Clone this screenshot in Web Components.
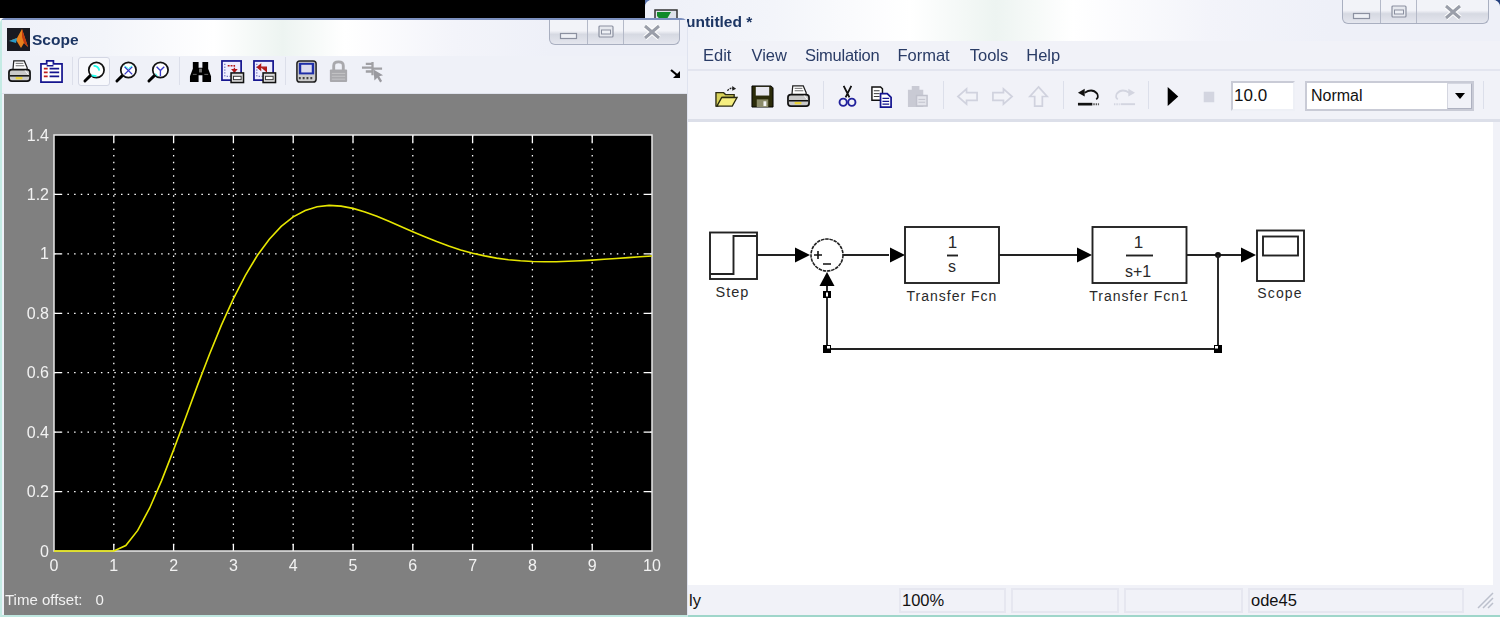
<!DOCTYPE html>
<html>
<head>
<meta charset="utf-8">
<title>Scope</title>
<style>
  html, body { margin: 0; height: 100%; overflow: hidden; background: #fff; }
  body {
    position: relative; width: 1500px; height: 619px;
    font-family: "Liberation Sans", Arial, sans-serif;
    background:
      linear-gradient(#000, #000) 0 0 / 645px 18px no-repeat,
      linear-gradient(#5b76b0, #5b76b0) 645px 0 / 8px 8px no-repeat,
      linear-gradient(#24407e, #24407e) 1490px 0 / 10px 8px no-repeat,
      #fff;
  }
</style>
</head>
<body>

<model-window title="untitled *">
  <tool-strip>
    <tool-btn icon="open" w="36"></tool-btn>
    <tool-btn icon="save" w="36"></tool-btn>
    <tool-btn icon="print" w="36"></tool-btn>
    <tool-sep w="14"></tool-sep>
    <tool-btn icon="cut" w="34"></tool-btn>
    <tool-btn icon="copy" w="34"></tool-btn>
    <tool-btn icon="paste" w="38"></tool-btn>
    <tool-sep w="14"></tool-sep>
    <tool-btn icon="back" w="34"></tool-btn>
    <tool-btn icon="forward" w="36"></tool-btn>
    <tool-btn icon="up" w="36"></tool-btn>
    <tool-sep w="14"></tool-sep>
    <tool-btn icon="undo" w="36"></tool-btn>
    <tool-btn icon="redo" w="36"></tool-btn>
    <tool-sep w="12"></tool-sep>
    <tool-btn icon="play" w="36"></tool-btn>
    <tool-btn icon="stop" w="36"></tool-btn>
    <sim-fields></sim-fields>
    <tool-sep w="19"></tool-sep>
  </tool-strip>
</model-window>

<scope-window title="Scope">
  <tool-strip>
    <tool-btn icon="print" w="32"></tool-btn>
    <tool-btn icon="params" w="32"></tool-btn>
    <tool-sep w="11"></tool-sep>
    <tool-btn icon="zoom" w="32" pressed></tool-btn>
    <tool-btn icon="zoomx" w="32"></tool-btn>
    <tool-btn icon="zoomy" w="32"></tool-btn>
    <tool-sep w="10"></tool-sep>
    <tool-btn icon="binoculars" w="32"></tool-btn>
    <tool-btn icon="saveaxes" w="32"></tool-btn>
    <tool-btn icon="restoreaxes" w="32"></tool-btn>
    <tool-sep w="10"></tool-sep>
    <tool-btn icon="scopeparams" w="32"></tool-btn>
    <tool-btn icon="lock" w="32"></tool-btn>
    <tool-btn icon="selector" w="36"></tool-btn>
  </tool-strip>
  <scope-plot></scope-plot>
</scope-window>

<script>
(function () {
  var INK = '#1c3563';
  var FONT = '"Liberation Sans", Arial, sans-serif';
  var SVG_FONT = "'Liberation Sans', Arial, sans-serif";

  // Toolbar glyphs, all on a 24 x 24 box.
  var ICONS = {
    print:
      '<path d="M6 1h11l3 7v4H5z" fill="#fff" stroke="#222" stroke-width="1.3"/>' +
      '<path d="M8 3.500h8M8 6h9" stroke="#666"/>' +
      '<path d="M1 13q0-3 3-3h16q3 0 3 3v6q0 3-3 3H4q-3 0-3-3z" fill="#c9c9c9" stroke="#111" stroke-width="1.8"/>' +
      '<path d="M2 16.500h20" stroke="#111" stroke-width="1.6"/><path d="M8 19h7" stroke="#e8d23a" stroke-width="2.4"/>' +
      '<path d="M18 11l3 4" stroke="#fff"/>',
    params:
      '<path d="M1 4h6V1h7v3h9v19H1z" fill="#fff" stroke="#16168f" stroke-width="1.8"/>' +
      '<path d="M4 9h4M4 13h4M4 17h4" stroke="#c02020" stroke-width="1.8"/>' +
      '<path d="M10 9h10M10 13h10M10 17h10M7 6h7" stroke="#16168f" stroke-width="1.8"/>',
    zoom: lens('<path d="M11 6a6 6 0 0 1 6 5" stroke="#2fe" stroke-width="2" fill="none"/><path d="M9 16l5 1" stroke="#2fe" stroke-width="2"/>'),
    zoomx: lens('<path d="M10 7l8 8M18 7l-8 8" stroke="#3a3ac8" stroke-width="1.4"/><path d="M10 6l4 3 4-3" stroke="#2fe" fill="none"/>'),
    zoomy: lens('<path d="M10 7l4 4 4-4M14 11v6" stroke="#3a3ac8" stroke-width="1.4" fill="none"/><path d="M9 14l2 3" stroke="#2fe"/>'),
    binoculars:
      '<path d="M4 2h6v6h4V2h6v7l3 8v6H14v-7h-4v7H1v-6l3-8z" fill="#000"/>' +
      '<path d="M10.500 9h3v4h-3z" fill="#777"/><path d="M4 15h4M16 15h4" stroke="#666"/>',
    saveaxes: axes('<path d="M7 6h7v6" fill="none" stroke="#b01818" stroke-width="1.4" stroke-dasharray="2 1"/><path d="M10.500 9.500h7l-3.500 4z" fill="#b01818"/>'),
    restoreaxes: axes('<path d="M8 4.500l-3.500 3 3.500 3zM8 7.500h6v5" fill="#b01818" stroke="#b01818" stroke-width="1.2"/>'),
    scopeparams:
      '<rect x="2" y="1" width="20" height="22" rx="3" fill="#ccc" stroke="#222" stroke-width="1.6"/>' +
      '<rect x="4" y="3" width="16" height="12" fill="#1e2ea8"/><rect x="6.500" y="5" width="11" height="8" fill="#dde"/>' +
      '<path d="M4 19h16" stroke="#444" stroke-width="2.4" stroke-dasharray="2 2"/>',
    lock:
      '<path d="M7 11V6q0-4 5-4t5 4v5" fill="none" stroke="#a9a9ad" stroke-width="3"/>' +
      '<rect x="3" y="10" width="18" height="13" rx="1" fill="#a9a9ad"/>' +
      '<path d="M5 14h14M5 17h14M5 20h14" stroke="#c4c4c8"/>',
    selector:
      '<path d="M1 8h11M5 4h7M5 12h7M12 2v14M12 9h10" stroke="#a0a0a4" stroke-width="2.4" fill="none"/>' +
      '<path d="M13 10l10 6-4 1 3 5-2 1.500-3-5-3 3z" fill="#9a9aa0"/>',
    open:
      '<path d="M1 8h8l2 2h9v3H8L3 22H1z" fill="#d8d25a" stroke="#2a2a10" stroke-width="1.4"/>' +
      '<path d="M2 22l5-9h16l-5 9z" fill="#f5ee80" stroke="#2a2a10" stroke-width="1.4"/>' +
      '<path d="M13 6q3-4 7-2" fill="none" stroke="#222" stroke-width="1.4" stroke-dasharray="2 1"/><path d="M18 1l4 3-4 2z" fill="#222"/>',
    save:
      '<path d="M1 1h20l2 2v20H1z" fill="#2b2b0a" stroke="#000"/>' +
      '<rect x="5" y="2" width="14" height="9" fill="#e8e8ef"/>' +
      '<rect x="6" y="15" width="12" height="8" fill="#8b8b6a"/><rect x="13" y="17" width="3" height="5" fill="#f4f4f4"/>',
    cut:
      '<path d="M8 1l6 12M16 1l-6 12" stroke="#111" stroke-width="1.9"/>' +
      '<circle cx="7.500" cy="18" r="3.800" fill="none" stroke="#22229c" stroke-width="2"/>' +
      '<circle cx="16.500" cy="18" r="3.800" fill="none" stroke="#22229c" stroke-width="2"/>',
    copy:
      '<path d="M2 2h9l2 2v12H2z" fill="#fff" stroke="#111" stroke-width="1.5"/><path d="M4 6h6M4 9h6M4 12h6" stroke="#333"/>' +
      '<path d="M11 9h7l4 4v10H11z" fill="#fff" stroke="#14148f" stroke-width="1.8"/><path d="M13 14h7M13 17h7M13 20h7" stroke="#14148f" stroke-width="1.3"/>',
    paste:
      '<path d="M2 5h4V1h8v4h4v18H2z" fill="#c9cad4"/><path d="M11 11h11v11H11z" fill="#e4e5ec" stroke="#c0c1cc" stroke-width="1.5"/>' +
      '<path d="M13 15h7M13 18h7" stroke="#c0c1cc"/>',
    back: '<path d="M11 4l-9 8 9 8v-4h11V8H11z" fill="#f2f3f8" stroke="#d0d2de" stroke-width="1.8"/>',
    forward: '<path d="M13 4l9 8-9 8v-4H2V8h11z" fill="#f2f3f8" stroke="#d0d2de" stroke-width="1.8"/>',
    up: '<path d="M12 2l9 10h-5v10H8V12H3z" fill="#f2f3f8" stroke="#d0d2de" stroke-width="1.8"/>',
    undo:
      '<path d="M8 8q8-5 13 1 2 4-1 6" fill="none" stroke="#111" stroke-width="1.8"/><path d="M1 8l7-4v8z" fill="#111"/>' +
      '<path d="M1 20h15" stroke="#111" stroke-width="2.8"/><path d="M17 20h6" stroke="#555" stroke-width="2" stroke-dasharray="1.500 1"/>',
    redo:
      '<path d="M17 8q-8-5-13 1-2 4 1 6" fill="none" stroke="#d3d5e0" stroke-width="1.8"/><path d="M23 8l-7-4v8z" fill="#d3d5e0"/>' +
      '<path d="M8 20h15" stroke="#d3d5e0" stroke-width="2"/><path d="M1 20h6" stroke="#d3d5e0" stroke-width="2" stroke-dasharray="1.500 1"/>',
    play: '<path d="M7 2l11 10-11 10z" fill="#000"/>',
    stop: '<rect x="7" y="7" width="11" height="11" fill="#d3d5e0"/>'
  };

  function lens(inner) {
    return '<path d="M9 15L2 22" stroke="#000" stroke-width="3" stroke-linecap="round"/>' +
      '<circle cx="14" cy="10.500" r="8" fill="#fff" stroke="#111" stroke-width="1.8"/>' + inner;
  }

  function axes(inner) {
    return '<rect x="1" y="1" width="20" height="20" fill="#eef" stroke="#16168f" stroke-width="1.8"/>' +
      '<path d="M4 4v13h14" fill="none" stroke="#16168f" stroke-dasharray="1 2"/>' + inner +
      '<rect x="10.500" y="13.500" width="13" height="10" fill="#ddd" stroke="#111" stroke-width="1.6"/>' +
      '<rect x="13" y="17" width="8" height="3.500" fill="#fff" stroke="#333"/>';
  }

  class ToolBtn extends HTMLElement {
    connectedCallback() {
      var w = this.getAttribute('w') || 32;
      var press = this.hasAttribute('pressed');
      var root = this.attachShadow({ mode: 'open' });
      root.innerHTML =
        '<style>' +
        ':host{display:flex;align-items:center;justify-content:center;width:' + w + 'px;height:29px;flex:none;box-sizing:border-box;}' +
        (press ? ':host{background:#f7f8fc;border:1px solid #d4d7e4;border-radius:3px;}' : '') +
        'svg{display:block;width:23px;height:23px;overflow:visible;}' +
        '</style>' +
        '<svg viewBox="0 0 24 24">' + (ICONS[this.getAttribute('icon')] || '') + '</svg>';
    }
  }
  customElements.define('tool-btn', ToolBtn);

  class ToolSep extends HTMLElement {
    connectedCallback() {
      var w = this.getAttribute('w') || 14;
      this.attachShadow({ mode: 'open' }).innerHTML =
        '<style>:host{display:flex;justify-content:center;width:' + w + 'px;height:30px;flex:none;}' +
        'i{display:block;width:1px;height:28px;background:#dcdfea;}</style><i></i>';
    }
  }
  customElements.define('tool-sep', ToolSep);

  class ToolStrip extends HTMLElement {
    connectedCallback() {
      this.attachShadow({ mode: 'open' }).innerHTML =
        '<style>:host{display:flex;align-items:center;}</style><slot></slot>';
    }
  }
  customElements.define('tool-strip', ToolStrip);

  // min / max / close cluster hanging from the top edge of a window
  class CaptionButtons extends HTMLElement {
    connectedCallback() {
      this.attachShadow({ mode: 'open' }).innerHTML =
        '<style>' +
        ':host{display:flex;height:var(--cap-h,25px);box-sizing:border-box;border:1px solid #a9afc0;border-top:0;border-radius:0 0 6px 6px;' +
        'background:linear-gradient(#f2f3f8 0,#f2f3f8 45%,#d6d9e2 60%,#e4e6ee 100%);overflow:hidden;}' +
        'span{display:flex;align-items:center;justify-content:center;border-right:1px solid #b4b9c8;box-sizing:border-box;}' +
        'span:last-child{border-right:0;}' +
        'svg{display:block;overflow:visible;}' +
        '</style>' +
        '<span style="width:38px"><svg width="18" height="7" style="margin-top:9px"><rect x=".5" y=".5" width="16" height="5" fill="#eef0f5" stroke="#8b90a0" stroke-width="1.2"/></svg></span>' +
        '<span style="width:36px"><svg width="16" height="14"><rect x="1" y="1" width="14" height="11" rx="1" fill="#e6e8ee" stroke="#8b90a0" stroke-width="1.2"/><rect x="3.500" y="5" width="9" height="4" fill="#eef0f5" stroke="#8b90a0"/></svg></span>' +
        '<span style="flex:1"><svg width="18" height="14"><path d="M2 1l14 12M16 1L2 13" stroke="#fff" stroke-width="5"/><path d="M2 1l14 12M16 1L2 13" stroke="#9a9ea9" stroke-width="3"/></svg></span>';
    }
  }
  customElements.define('caption-buttons', CaptionButtons);

  var TITLE_BG = 'linear-gradient(90deg,#eef0f8 0,#f3f5fa 15%,#fff 31%,#edf4f1 41%,#fff 50%,#f3f4fa 66%,#eef0f8 80%)';

  class ScopeWindow extends HTMLElement {
    connectedCallback() {
      var root = this.attachShadow({ mode: 'open' });
      root.innerHTML =
        '<style>' +
        ':host{position:absolute;left:0;top:18px;width:688px;height:599px;display:flex;flex-direction:column;box-sizing:border-box;' +
        'background:#eff1f8;border-top:2px solid #7c90bf;border-left:2px solid #c4ebe4;border-right:1px solid #dfe3ef;border-bottom:2px solid #bfe8e0;' +
        'border-radius:5px 7px 0 0;font-family:' + FONT + ';filter:blur(.5px);}' +
        '.title{height:36px;flex:none;display:flex;align-items:center;padding:0 7px 0 5px;background:' + TITLE_BG + ';}' +
        '.logo{width:23px;height:23px;flex:none;margin:2px 2px 0 0;display:block;}' +
        '.name{flex:1;font-size:15.500px;font-weight:700;color:' + INK + ';margin-top:4px;}' +
        'caption-buttons{width:131px;align-self:flex-start;}' +
        '.bar{height:38px;flex:none;display:flex;align-items:center;padding:0 0 6px 1px;box-sizing:border-box;border-bottom:1px solid #dfe2ec;position:relative;}' +
        '.resize{position:absolute;right:6px;top:12px;}' +
        '.body{flex:1;display:flex;padding-left:2px;min-height:0;}' +
        '</style>' +
        '<div class="title">' +
        '<svg class="logo" viewBox="0 0 23 23"><rect width="23" height="23" fill="#1a1a22"/>' +
        '<path d="M2 13l8-3 5-9 6 18-4-4-3 5-5-8z" fill="#e8801c"/><path d="M2 13l8-3-1 5z" fill="#2a9ac8"/><path d="M15 1l6 18-4-4-2-6z" fill="#c23a10"/></svg>' +
        '<span class="name">' + this.getAttribute('title') + '</span>' +
        '<caption-buttons></caption-buttons></div>' +
        '<div class="bar"><slot></slot>' +
        '<svg class="resize" width="11" height="11" viewBox="0 0 11 11"><path d="M1 2l6 5" stroke="#000" stroke-width="2.2"/><path d="M10 3v7H3z" fill="#000"/></svg></div>' +
        '<div class="body"><slot name="plot"></slot></div>';
      this.querySelector('scope-plot').setAttribute('slot', 'plot');
    }
  }
  customElements.define('scope-window', ScopeWindow);

  class ScopePlot extends HTMLElement {
    connectedCallback() {
      var L = 50, R = 648, T = 41, B = 457; // axes box inside the grey panel
      var xOf = function (t) { return L + (R - L) * t / 10; };
      var yOf = function (v) { return B - (B - T) * v / 1.4; };
      var s = '', i;

      s += '<rect x="' + L + '" y="' + T + '" width="' + (R - L) + '" height="' + (B - T) + '" fill="#000"/>';
      for (i = 1; i < 10; i++) {
        s += '<path d="M' + xOf(i) + ' ' + T + 'V' + B + '" stroke="#fff" stroke-width="1.3" stroke-dasharray="1.500 5.200"/>';
        s += '<path d="M' + xOf(i) + ' ' + T + 'v7M' + xOf(i) + ' ' + B + 'v-7" stroke="#fff" stroke-width="1.3"/>';
      }
      for (i = 1; i < 7; i++) {
        var gy = yOf(i * 0.2);
        s += '<path d="M' + L + ' ' + gy + 'H' + R + '" stroke="#fff" stroke-width="1.3" stroke-dasharray="1.500 5.200"/>';
        s += '<path d="M' + L + ' ' + gy + 'h7M' + R + ' ' + gy + 'h-7" stroke="#fff" stroke-width="1.3"/>';
      }
      s += '<rect x="' + L + '" y="' + T + '" width="' + (R - L) + '" height="' + (B - T) + '" fill="none" stroke="#e8e8e8" stroke-width="1.5"/>';

      // unit step into 1/(s^2+s+1), step applied at t = 1; coarse steps like the solver's
      var pts = ['M' + xOf(0) + ' ' + yOf(0), 'L' + xOf(1) + ' ' + yOf(0)];
      for (var t = 1.2; t <= 10.001; t += 0.2) {
        var u = t - 1;
        var v = 1 - Math.exp(-0.5 * u) * (Math.cos(0.866 * u) + 0.5774 * Math.sin(0.866 * u));
        pts.push('L' + xOf(t).toFixed(1) + ' ' + yOf(v).toFixed(1));
      }
      s += '<path d="' + pts.join('') + '" fill="none" stroke="#e6e600" stroke-width="1.6"/>';

      var txt = 'font-family:' + SVG_FONT + ';font-size:16px;fill:#f2f2f2';
      ['0', '0.2', '0.4', '0.6', '0.8', '1', '1.2', '1.4'].forEach(function (lab, n) {
        s += '<text x="' + (L - 5) + '" y="' + (yOf(n * 0.2) + 5.5) + '" text-anchor="end" style="' + txt + '">' + lab + '</text>';
      });
      for (i = 0; i <= 10; i++) {
        s += '<text x="' + xOf(i) + '" y="' + (B + 20) + '" text-anchor="middle" style="' + txt + '">' + i + '</text>';
      }

      this.attachShadow({ mode: 'open' }).innerHTML =
        '<style>:host{display:block;flex:1;background:#808080;position:relative;}' +
        'svg{display:block;width:683px;height:522px;}' +
        '.off{position:absolute;left:1px;bottom:7px;color:#f2f2f2;font-size:15px;display:flex;gap:13px;}</style>' +
        '<svg viewBox="0 0 683 522">' + s + '</svg>' +
        '<div class="off"><span>Time offset:</span><span>0</span></div>';
    }
  }
  customElements.define('scope-plot', ScopePlot);

  class SimFields extends HTMLElement {
    connectedCallback() {
      this.attachShadow({ mode: 'open' }).innerHTML =
        '<style>' +
        ':host{display:flex;align-items:center;gap:10px;margin-left:5px;flex:none;}' +
        '.inp{box-sizing:border-box;height:30px;background:#fff;border:2px solid;border-color:#c9cbd6 #eef0f6 #eef0f6 #c9cbd6;font-size:17px;color:#111;display:flex;align-items:center;padding-left:1px;}' +
        '.stop-time{width:64px;}' +
        '.mode{width:169px;padding-left:4px;justify-content:space-between;padding-right:0;border-color:#c9cbd6;font-size:16px;}' +
        '.drop{width:25px;height:26px;box-sizing:border-box;background:#f1f2f8;border:1px solid #d4d6e0;border-bottom-color:#aeb1c0;border-right-color:#aeb1c0;display:flex;align-items:center;justify-content:center;}' +
        '.drop i{display:block;width:0;height:0;border:5.500px solid transparent;border-top:6px solid #000;border-bottom:0;}' +
        '</style>' +
        '<div class="inp stop-time">10.0</div>' +
        '<div class="inp mode"><span>Normal</span><span class="drop"><i></i></span></div>';
    }
  }
  customElements.define('sim-fields', SimFields);

  class ModelCanvas extends HTMLElement {
    connectedCallback() {
      var lw = 'stroke="#222" fill="none" stroke-width="1.9"';
      var tri = function (x, y) { return '<path d="M' + (x - 15) + ' ' + (y - 7.5) + 'L' + x + ' ' + y + 'L' + (x - 15) + ' ' + (y + 7.5) + 'z" fill="#000"/>'; };
      var lab = function (x, y, t, size, sp) {
        return '<text x="' + x + '" y="' + y + '" text-anchor="middle" style="font-size:' + (size || 14) + 'px;letter-spacing:' + (sp === undefined ? 1 : sp) + 'px;fill:#2a2a2a">' + t + '</text>';
      };
      // drawn in page coordinates, the group takes the canvas origin off
      var s =
        '<g transform="translate(-650,-122)">' +
        // step
        '<rect x="710" y="232.500" width="47" height="46.500" ' + lw + '/>' +
        '<path d="M710 274H733.500V236H757" ' + lw + '/>' +
        lab(732.5, 297, 'Step', 14.5) +
        '<path d="M757 255H795" ' + lw + '/>' + tri(810, 255) +
        // sum
        '<circle cx="827" cy="255" r="16" fill="#fff" stroke="#222" stroke-width="1.6" stroke-dasharray="3.500 .8"/>' +
        '<path d="M814 255h8M818 251v8M823 264h8" stroke="#111" stroke-width="1.6"/>' +
        '<path d="M843 255H889" ' + lw + '/>' + tri(905, 255) +
        // transfer fcn
        '<rect x="905" y="227" width="94" height="56" ' + lw + '/>' +
        '<path d="M947 255.500h11" ' + lw + '/>' +
        lab(952.5, 248, '1', 17, 0) + lab(952, 272, 's', 16, 0) +
        lab(952, 301, 'Transfer Fcn') +
        '<path d="M999 255H1077" ' + lw + '/>' + tri(1092, 255) +
        // transfer fcn1
        '<rect x="1092.500" y="227" width="94" height="56" ' + lw + '/>' +
        '<path d="M1126 255.500h27" ' + lw + '/>' +
        lab(1138.5, 248, '1', 17, 0) + lab(1138, 277, 's+1', 16, 0) +
        lab(1139, 301, 'Transfer Fcn1') +
        '<path d="M1187 255H1241" ' + lw + '/>' + tri(1256, 255) +
        '<circle cx="1218" cy="255" r="3" fill="#111"/>' +
        // scope
        '<rect x="1257" y="230.500" width="47" height="50.500" ' + lw + '/>' +
        '<rect x="1263" y="236.500" width="35" height="19" ' + lw + '/>' +
        lab(1280, 298, 'Scope', 14, 1.2) +
        // feedback
        '<path d="M1218 255V349H827V286" ' + lw + '/>' +
        '<path d="M819.500 286L827 272L834.500 286z" fill="#000"/>' +
        '<rect x="823" y="291" width="8" height="7" fill="#000"/><rect x="826" y="292.500" width="2" height="4" fill="#fff"/>' +
        '<rect x="823" y="345" width="8" height="8" fill="#000"/><rect x="827" y="346" width="3" height="2.500" fill="#fff"/>' +
        '<rect x="1214" y="345" width="8" height="8" fill="#000"/><rect x="1215" y="346" width="3" height="2.500" fill="#fff"/>' +
        '</g>';
      this.attachShadow({ mode: 'open' }).innerHTML =
        '<style>:host{display:block;flex:1;background:#fff;min-height:0;}' +
        'svg{display:block;width:843px;height:463px;font-family:' + SVG_FONT + ';}</style>' +
        '<svg viewBox="0 0 843 463">' + s + '</svg>';
    }
  }
  customElements.define('model-canvas', ModelCanvas);

  class StatusBar extends HTMLElement {
    connectedCallback() {
      this.attachShadow({ mode: 'open' }).innerHTML =
        '<style>' +
        ':host{height:30px;flex:none;display:flex;align-items:center;gap:5px;padding-left:44px;box-sizing:border-box;font-size:16.500px;color:#111;background:#f1f2f8;}' +
        'span{display:flex;align-items:center;height:25px;box-sizing:border-box;flex:none;padding-left:1px;border:2px solid #e6e7f0;}' +
        '.ready{width:205px;border:0;padding:0;}' +
        '.grip{margin-left:auto;margin-right:6px;}' +
        '</style>' +
        '<span class="ready">ly</span>' +
        '<span style="width:107px">100%</span><span style="width:108px"></span><span style="width:119px"></span><span style="width:216px">ode45</span>' +
        '<svg class="grip" width="18" height="18" viewBox="0 0 18 18"><path d="M2 17L17 2M7 17L17 7M12 17l5-5" stroke="#bcc0cc" stroke-width="1.5"/></svg>';
    }
  }
  customElements.define('status-bar', StatusBar);

  class ModelWindow extends HTMLElement {
    connectedCallback() {
      var root = this.attachShadow({ mode: 'open' });
      root.innerHTML =
        '<style>' +
        ':host{position:absolute;left:645px;top:0;width:855px;height:617px;display:flex;flex-direction:column;box-sizing:border-box;' +
        'background:#f1f2f8;border-radius:7px 7px 0 0;overflow:hidden;border-bottom:2px solid #9fd6ca;font-family:' + FONT + ';filter:blur(.5px);}' +
        '.title{height:41px;flex:none;display:flex;padding:0 11px 0 9px;box-sizing:border-box;background:' + TITLE_BG + ';}' +
        '.logo{width:24px;height:24px;margin-top:9px;flex:none;}' +
        '.name{flex:1;font-size:15.500px;font-weight:700;color:' + INK + ';padding:13px 0 0 8px;}' +
        'caption-buttons{width:147px;--cap-h:24px;}' +
        '.menu{height:30px;flex:none;display:flex;align-items:center;padding-left:58px;gap:18px;font-size:16.500px;color:#2a3c66;border-bottom:2px solid #e3e5ef;box-sizing:border-box;}' +
        '.menu span:nth-child(2){margin-left:2px;}' +
        '.menu span:nth-child(3){letter-spacing:-.25px;}' +
        '.menu span:nth-child(5){margin-left:2px;}' +
        '.bar{height:51px;flex:none;display:flex;align-items:center;padding:2px 0 0 63px;box-sizing:border-box;border-bottom:3px solid #dcdfe9;}' +
        '.view{flex:1;display:flex;min-height:0;padding:0 7px 0 5px;}' +
        '</style>' +
        '<div class="title"><svg class="logo" viewBox="0 0 24 24"><rect x="1" y="1" width="22" height="22" fill="#dfe2ea" stroke="#333" stroke-width="1.5"/><path d="M3 3h14l-7 12-7-8z" fill="#108a2a"/></svg>' +
        '<span class="name">' + this.getAttribute('title') + '</span><caption-buttons></caption-buttons></div>' +
        '<div class="menu"><span>Edit</span><span>View</span><span>Simulation</span><span>Format</span><span>Tools</span><span>Help</span></div>' +
        '<div class="bar"><slot></slot></div>' +
        '<div class="view"><model-canvas></model-canvas></div>' +
        '<status-bar></status-bar>';
    }
  }
  customElements.define('model-window', ModelWindow);
})();
</script>
</body>
</html>
